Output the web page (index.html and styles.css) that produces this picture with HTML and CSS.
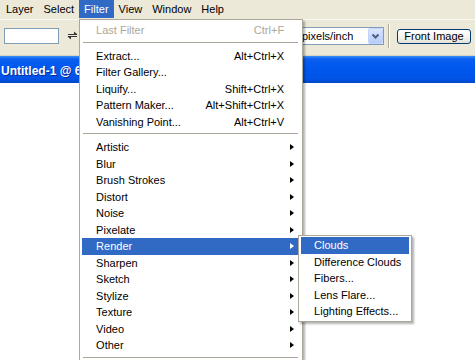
FILE: index.html
```html
<!DOCTYPE html>
<html lang="en">
<head>
  <meta charset="UTF-8" />
  <title>Filter menu</title>
  <link rel="stylesheet" href="styles.css">
</head>
<body>
  <div class="menubar">
    <span class="mb-item first">Layer</span>
    <span class="mb-item">Select</span>
    <span class="mb-item open">Filter
      <div class="menu">
        <div class="item disabled"><span class="label">Last Filter</span><span class="key">Ctrl+F</span></div>
        <div class="sep"></div>
        <div class="item"><span class="label">Extract...</span><span class="key">Alt+Ctrl+X</span></div>
        <div class="item"><span class="label">Filter Gallery...</span></div>
        <div class="item"><span class="label">Liquify...</span><span class="key">Shift+Ctrl+X</span></div>
        <div class="item"><span class="label">Pattern Maker...</span><span class="key">Alt+Shift+Ctrl+X</span></div>
        <div class="item"><span class="label">Vanishing Point...</span><span class="key">Alt+Ctrl+V</span></div>
        <div class="sep"></div>
        <div class="item sub"><span class="label">Artistic</span></div>
        <div class="item sub"><span class="label">Blur</span></div>
        <div class="item sub"><span class="label">Brush Strokes</span></div>
        <div class="item sub"><span class="label">Distort</span></div>
        <div class="item sub"><span class="label">Noise</span></div>
        <div class="item sub"><span class="label">Pixelate</span></div>
        <div class="item sub active"><span class="label">Render</span>
          <div class="submenu">
            <div class="item active"><span class="label">Clouds</span></div>
            <div class="item"><span class="label">Difference Clouds</span></div>
            <div class="item"><span class="label">Fibers...</span></div>
            <div class="item"><span class="label">Lens Flare...</span></div>
            <div class="item"><span class="label">Lighting Effects...</span></div>
          </div>
        </div>
        <div class="item sub"><span class="label">Sharpen</span></div>
        <div class="item sub"><span class="label">Sketch</span></div>
        <div class="item sub"><span class="label">Stylize</span></div>
        <div class="item sub"><span class="label">Texture</span></div>
        <div class="item sub"><span class="label">Video</span></div>
        <div class="item sub"><span class="label">Other</span></div>
        <div class="sep"></div>
      </div>
    </span>
    <span class="mb-item">View</span>
    <span class="mb-item">Window</span>
    <span class="mb-item">Help</span>
  </div>

  <div class="toolbar">
    <div class="field"></div>
    <svg class="swap" width="11" height="9" viewBox="0 0 11 9">
      <path d="M1 3.5H10" stroke="#333" stroke-width="1" />
      <polygon points="7,0.5 10.5,3.5 7,3.5" fill="#333" />
      <path d="M1 5.5H10" stroke="#333" stroke-width="1" />
      <polygon points="4,5.5 0.5,5.5 4,8.5" fill="#333" />
    </svg>
    <div class="right-group">
      <div class="select">
        <span class="select-text">pixels/inch</span>
        <span class="select-btn">
          <svg width="13" height="14" viewBox="0 0 13 14">
            <path d="M3.5 5.5 L6.5 8.5 L9.5 5.5" fill="none" stroke="#4d6185" stroke-width="2" />
          </svg>
        </span>
      </div>
      <div class="vsep"></div>
      <button class="btn">Front Image</button>
    </div>
  </div>

  <div class="doc">
    <div class="doc-title"><span class="doc-name">Untitled-1 @ 66.7% (RGB/8)</span></div>
    <div class="doc-canvas"></div>
  </div>
</body>
</html>
```

FILE: styles.css
```css
* {
  box-sizing: border-box;
}

html, body {
  margin: 0;
  padding: 0;
  width: 475px;
  height: 360px;
  overflow: hidden;
  background: #fff;
  font-family: "Liberation Sans", Arial, sans-serif;
  font-size: 11px;
  color: #000;
}

body {
  display: flex;
  flex-direction: column;
}

/* menu bar */

.menubar {
  display: flex;
  height: 19px;
  background: #ece9d8;
  position: relative;
  z-index: 10;
}

.mb-item {
  padding: 0 5px;
  height: 18px;
  line-height: 18px;
  white-space: nowrap;
}

.mb-item.first {
  margin-left: 1px;
}

.mb-item.open {
  position: relative;
  background: #316ac5;
  color: #fff;
}

/* dropdown menu */

.menu {
  position: absolute;
  left: 0;
  top: 19px;
  width: 224px;
  padding: 2px 3px 2px 2px;
  background: #fff;
  border: 1px solid #aca899;
  box-shadow: 2px 2px 2px rgba(0, 0, 0, 0.3);
  color: #000;
  line-height: normal;
}

.item {
  display: flex;
  align-items: center;
  height: 16.5px;
  padding: 0 15px 0 14px;
  white-space: nowrap;
}

.item .label {
  flex: 1;
}

.item.disabled {
  color: #aca899;
}

.item.sub::after {
  content: '';
  width: 0;
  height: 0;
  border-left: 4px solid #000;
  border-top: 3.5px solid transparent;
  border-bottom: 3.5px solid transparent;
  margin-right: -10px;
}

.item.active {
  background: #316ac5;
  color: #fff;
}

.item.sub.active::after {
  border-left-color: #fff;
}

.sep {
  margin: 3px 1px 5px;
  border-top: 1px solid #aca899;
}

.item.sub.active {
  position: relative;
}

.submenu {
  position: absolute;
  left: 216px;
  top: -3px;
  width: 114px;
  padding: 1px 2px;
  background: #fff;
  border: 1px solid #aca899;
  box-shadow: 2px 2px 2px rgba(0, 0, 0, 0.3);
  color: #000;
  z-index: 2;
}

.submenu .item {
  padding-left: 13px;
}

.submenu .item.active {
  color: #fff;
}

/* options bar */

.toolbar {
  display: flex;
  align-items: flex-start;
  height: 37px;
  padding: 8px 4px 0 4px;
  background: #ece9d8;
  border-top: 1px solid #f8f7f2;
  border-bottom: 1px solid #d8d4c2;
}

.field {
  width: 55px;
  height: 16px;
  border: 1px solid #7f9db9;
  background: #fff;
}

.swap {
  margin: 3px 0 0 8px;
}

.right-group {
  display: flex;
  align-items: flex-start;
  margin-left: auto;
  margin-top: -1px;
}

.select {
  display: flex;
  width: 86px;
  height: 18px;
  border: 1px solid #7f9db9;
  background: #fff;
}

.select-text {
  flex: 1;
  padding-left: 3px;
  line-height: 16px;
}

.select-btn {
  width: 15px;
  height: 16px;
  background: linear-gradient(#dce7fd, #b6cbf7);
  border: 1px solid #c3d3fd;
  border-radius: 2px;
}

.select-btn svg {
  display: block;
}

.vsep {
  width: 2px;
  height: 24px;
  margin: -3px 7px 0 4px;
  border-left: 1px solid #aca899;
  border-right: 1px solid #fff;
}

.btn {
  width: 74px;
  height: 15px;
  margin-top: 2px;
  padding: 0;
  border: 1px solid #003c74;
  border-radius: 3px;
  background: linear-gradient(#ffffff, #f3f2ec 60%, #e3e1d6);
  font-family: "Liberation Sans", Arial, sans-serif;
  font-size: 11px;
  line-height: 13px;
  color: #000;
}

/* document window */

.doc {
  flex: 1;
  display: flex;
  flex-direction: column;
}

.doc-title {
  height: 27px;
  padding: 4px 0 0 1px;
  line-height: 23px;
  font-size: 12px;
  font-weight: bold;
  color: #fff;
  white-space: nowrap;
  text-shadow: 1px 1px 0 #0a2a9a;
  background: linear-gradient(#3d8ef7 0, #0a5ff0 3px, #0058ee 40%, #0053e6 85%, #0046c9 100%);
}

/* the rest of the title sits under the open menu */
.doc-name {
  display: block;
  width: 78px;
  overflow: hidden;
}

.doc-canvas {
  flex: 1;
  background: #fff;
}
```
